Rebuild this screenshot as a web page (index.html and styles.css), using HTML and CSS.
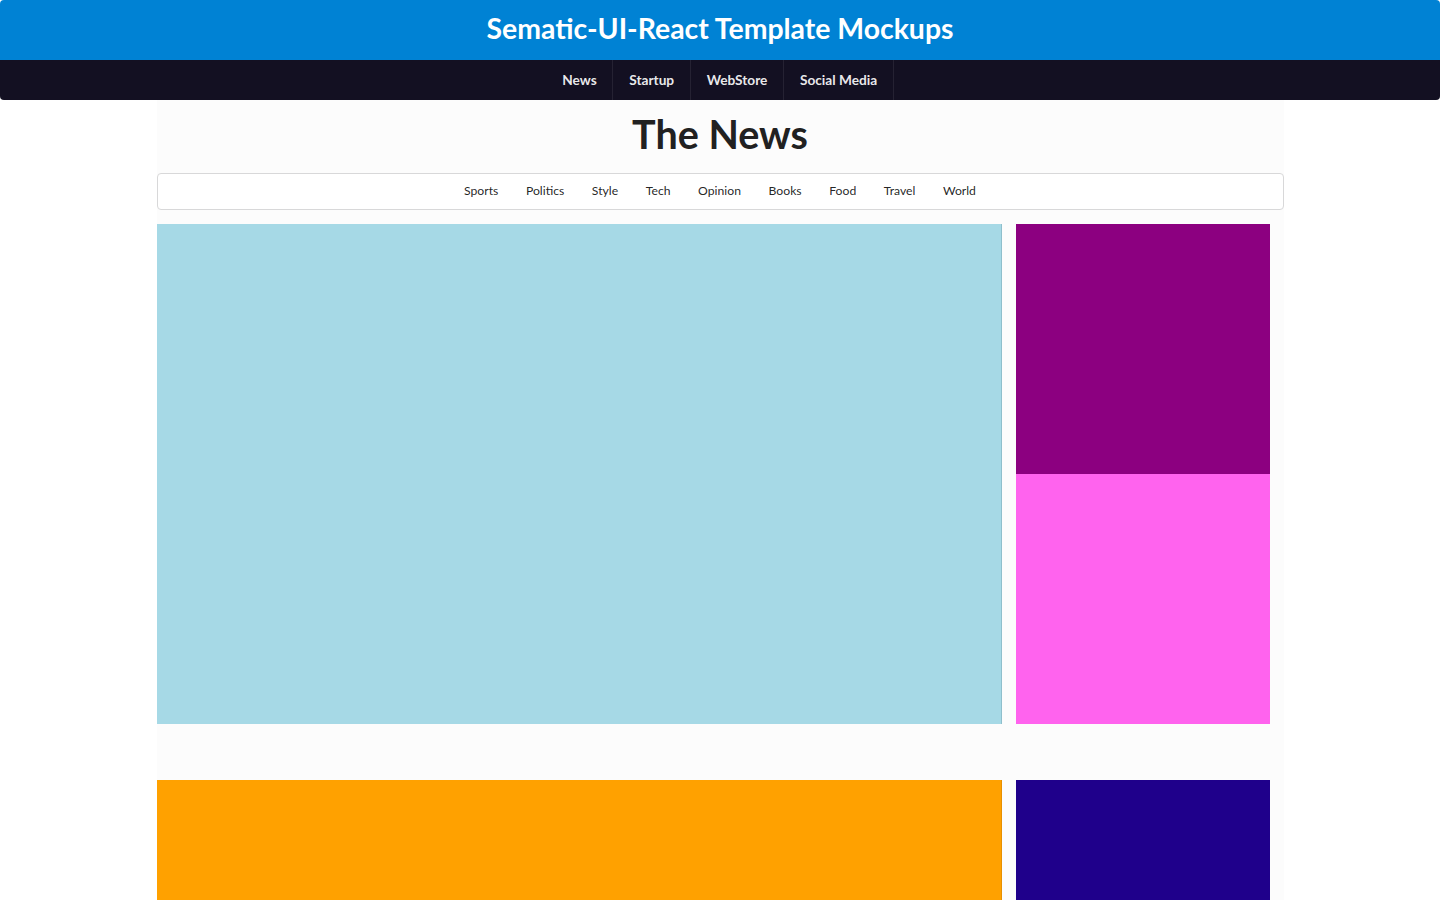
FILE: index.html
```html
<!DOCTYPE html>
<html>
<head>
<meta charset="utf-8">
<title>Sematic-UI-React Template Mockups</title>
<link rel="stylesheet" href="styles.css">
</head>
<body>
<header class="masthead">
  <div class="title-bar">
    <h1 class="site-title">Sematic-UI-React Template Mockups</h1>
  </div>
  <nav class="main-nav">
    <a class="nav-item">News</a>
    <a class="nav-item">Startup</a>
    <a class="nav-item">WebStore</a>
    <a class="nav-item">Social Media</a>
  </nav>
</header>
<main class="container">
  <h2 class="page-title">The News</h2>
  <nav class="section-menu">
    <a class="section-item">Sports</a>
    <a class="section-item">Politics</a>
    <a class="section-item">Style</a>
    <a class="section-item">Tech</a>
    <a class="section-item">Opinion</a>
    <a class="section-item">Books</a>
    <a class="section-item">Food</a>
    <a class="section-item">Travel</a>
    <a class="section-item">World</a>
  </nav>
  <section class="row row-first">
    <div class="main-col block-lightblue"></div>
    <div class="side-col">
      <div class="side-block block-purple"></div>
      <div class="side-block block-pink"></div>
    </div>
  </section>
  <section class="row row-second">
    <div class="main-col block-orange"></div>
    <div class="side-col">
      <div class="side-block block-indigo"></div>
    </div>
  </section>
</main>
</body>
</html>
```
FILE: styles.css
```css
html, body {
  margin: 0;
  padding: 0;
  background: #ffffff;
  font-family: Lato, "Helvetica Neue", Arial, sans-serif;
  overflow: hidden;
}

.masthead {
  width: 100%;
}

.title-bar {
  background: #0082d4;
  height: 60px;
  border-radius: 4px 4px 0 0;
  display: flex;
  align-items: center;
  justify-content: center;
}

.site-title {
  margin: 0;
  color: #ffffff;
  font-size: 28.4px;
  font-weight: 700;
  line-height: 1;
  padding-bottom: 4px;
}

.main-nav {
  background: #131022;
  height: 40px;
  border-radius: 0 0 4px 4px;
  display: flex;
  justify-content: center;
  align-items: stretch;
}

.nav-item {
  display: flex;
  align-items: center;
  padding: 0 15.5px 2px 16px;
  color: rgba(255, 255, 255, 0.92);
  font-size: 13.7px;
  font-weight: 700;
  border-right: 1px solid rgba(255, 255, 255, 0.08);
}

.container {
  width: 1127px;
  margin: 0 auto;
  background: #fcfcfc;
  padding-top: 11px;
  min-height: 800px;
}

.page-title {
  margin: 0;
  text-align: center;
  font-size: 39.5px;
  font-weight: 700;
  color: #212121;
  line-height: 46px;
}

.section-menu {
  margin-top: 16px;
  height: 35px;
  background: #ffffff;
  border: 1px solid #d8d8d9;
  border-radius: 4px;
  display: flex;
  justify-content: center;
  align-items: center;
  padding-bottom: 2px;
  box-sizing: content-box;
  height: 33px;
}

.section-item {
  padding: 0 13.8px;
  font-size: 12.2px;
  color: rgba(0, 0, 0, 0.87);
}

.row {
  display: flex;
  height: 500px;
}

.row-first {
  margin-top: 14px;
}

.row-second {
  margin-top: 56px;
}

.main-col {
  width: 845px;
  box-sizing: border-box;
  height: 100%;
}

.side-col {
  width: 254px;
  margin-left: 14px;
  display: flex;
  flex-direction: column;
}

.side-block {
  flex: 1;
}

.block-lightblue {
  background: #a6d9e6;
  border-right: 1px solid #8fbfcc;
}

.block-orange {
  background: #ffa100;
  border-right: 1px solid #e89000;
}

.block-purple {
  background: #8c0080;
}

.block-pink {
  background: #ff63ee;
}

.block-indigo {
  background: #1f008b;
}
```
